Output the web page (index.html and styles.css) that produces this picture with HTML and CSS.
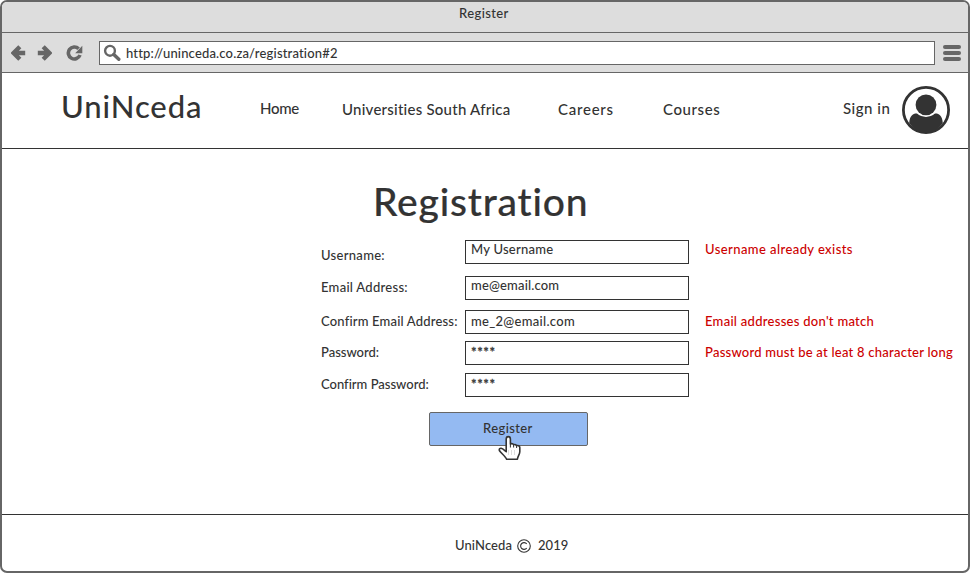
FILE: index.html
```html
<!DOCTYPE html>
<html lang="en">
<head>
<meta charset="utf-8">
<title>Register</title>
<link rel="stylesheet" href="styles.css">
</head>
<body>
<div class="window">
  <div class="titlebar"><span class="t-title">Register</span></div>
  <div class="toolbar">
    <svg class="arrow" width="16" height="16" viewBox="0 0 16 16"><path d="M8.800 1.800 2.600 8l6.200 6.200M3 8h11.200" /></svg>
    <svg class="arrow forward" width="16" height="16" viewBox="0 0 16 16"><path d="M7.200 1.800 13.400 8l-6.200 6.200M13 8H1.800" /></svg>
    <svg class="reload" width="17" height="16" viewBox="0 0 17 16"><path class="ring" d="M12.6 3.7A6 6 0 1 0 14 10" /><path class="tip" d="M16.3.8v7.4H9.2z" /></svg>
    <div class="address">
      <svg width="18" height="18" viewBox="0 0 18 18"><circle cx="7" cy="6.8" r="4.9" /><path d="M10.8 10.5 15.800 15.3" /></svg>
      <span class="t-url">http://uninceda.co.za/registration#2</span>
    </div>
    <div class="menu"><i></i><i></i><i></i></div>
  </div>
  <header class="header">
    <div class="logo">UniNceda</div>
    <nav class="nav">
      <a class="home">Home</a>
      <a class="unis">Universities South Africa</a>
      <a class="careers">Careers</a>
      <a class="courses">Courses</a>
    </nav>
    <a class="signin">Sign in</a>
    <svg class="avatar" width="48" height="48" viewBox="0 0 48 48">
      <circle class="rim" cx="24" cy="24" r="22.6" />
      <circle cx="24" cy="18.8" r="10.4" />
      <path d="M7.2 37C7.800 30 10.500 27.500 15 27.600 20 32 28 32 33 27.600 37.500 27.500 40.200 30 40.800 37 36 43.5 31 47 24 47S12 43.5 7.2 37z" />
    </svg>
  </header>
  <main class="main">
    <h1>Registration</h1>
    <form class="form">
      <div class="row r1"><label class="l1">Username:</label><div class="field high f1"><span>My Username</span></div><p class="error e1">Username already exists</p></div>
      <div class="row r2"><label class="l2">Email Address:</label><div class="field high f2"><span>me@email.com</span></div></div>
      <div class="row r3"><label class="l3">Confirm Email Address:</label><div class="field f3"><span>me_2@email.com</span></div><p class="error e3">Email addresses don't match</p></div>
      <div class="row r4"><label class="l4">Password:</label><div class="field stars"><span>****</span></div><p class="error e4">Password must be at leat 8 character long</p></div>
      <div class="row r5"><label class="l5">Confirm Password:</label><div class="field stars"><span>****</span></div></div>
      <div class="button"><span>Register</span>
        <svg class="cursor" width="24" height="26" viewBox="0 0 24 26"><path class="hand" d="M8.2 15V4.2C8.2.7 12.4.7 12.4 4.2V9c1.4-.7 2.8-.2 3.2.7 1.4-.4 2.4 0 2.9.9 1.6-.5 3.3.3 3.3 2v4.2c0 2.8-2 4.2-2.4 7.4H8.6C7.5 21.500 3 18 1.5 15.700c-.8-1.800.7-3 2.400-2.200 1.600.6 2.800 2.200 4.300 3.200z" /><path class="knuckles" d="M12.400 9v3.500M15.600 10v2.500M18.600 11v2" /><path class="creases" d="M10.500 15v5M13.500 15v5M16.500 15v5" /></svg>
      </div>
    </form>
  </main>
  <footer class="footer"><span class="brand">UniNceda</span><svg width="14" height="14" viewBox="0 0 14 14"><circle cx="7" cy="7" r="6.300" /><path d="M9.700 4.900A3.400 3.400 0 1 0 9.700 9.100" /></svg><span class="year">2019</span></footer>
</div>
</body>
</html>
```
FILE: styles.css
```css
* { box-sizing: border-box; }
html, body { height: 100%; }
body { margin: 0; background: #fff; color: #333; font: 500 13px/20px Lato, "Open Sans", sans-serif; white-space: nowrap; overflow: hidden; font-variant-ligatures: none; }
h1, p { margin: 0; }
.window { height: 573px; border: 2px solid #666; border-radius: 7px; overflow: hidden; background: #fff; }
.titlebar { height: 31px; background: #ddd; border-bottom: 1px solid #666; padding: 1px 0 0 457px; }
.t-title { letter-spacing: .4px; }
.t-url { letter-spacing: .17px; }
.toolbar { height: 40px; background: #ddd; border-bottom: 1px solid #666; display: flex; align-items: center; padding: 0 6px 0 9px; }
.arrow { fill: none; stroke: #666; stroke-width: 4.4; flex: none; }
.forward { margin-left: 9px; }
.reload { margin: 0 16px 0 14px; flex: none; }
.ring { fill: none; stroke: #666; stroke-width: 3.6; }
.tip { fill: #666; }
.address { width: 836px; flex: none; height: 24px; border: 1px solid #666; background: #fff; display: flex; align-items: center; padding-left: 3px; }
.address svg { fill: none; stroke: #666; stroke-width: 2.4; margin-right: 5px; }
.address path { stroke-width: 3.4; stroke-linecap: round; }
.menu { width: 18px; flex: none; margin-left: 8px; display: grid; gap: 2px; }
.menu i { height: 4px; border-radius: 2px; background: #666; }
.header { height: 76px; border-bottom: 1px solid #333; display: flex; align-items: flex-start; font-size: 15px; }
.logo { width: 198px; padding-left: 59px; font-size: 31px; line-height: 40px; margin-top: 13px; letter-spacing: .9px; }
.nav { display: flex; width: 643px; padding: 26px 0 0 60px; }
.home { width: 82px; margin-top: -1px; letter-spacing: -.3px; }
.unis { width: 216px; letter-spacing: .24px; }
.careers { width: 105px; letter-spacing: .75px; }
.courses { letter-spacing: .6px; }
.signin { width: 59px; padding-top: 25px; letter-spacing: .5px; }
.avatar { margin-top: 13px; fill: #333; }
.rim { fill: none; stroke: #333; stroke-width: 2.8; }
.main { height: 365px; padding-top: 27px; }
h1 { font-size: 39px; line-height: 50px; font-weight: 500; padding-left: 371px; letter-spacing: .8px; -webkit-text-stroke: .2px; }
.form { padding: 14px 0 0 319px; }
.row { display: grid; grid-template-columns: 144px 224px 1fr; align-items: start; height: 24px; }
.row label { padding-top: 1px; }
.r1 { margin-bottom: 12px; }
.r1 label { padding-top: 5px; }
.r2 { margin-bottom: 10px; }
.r3 { margin-bottom: 7px; }
.r4 { margin-bottom: 8px; }
.l1 { letter-spacing: .3px; }
.l2 { letter-spacing: .28px; }
.l3 { letter-spacing: .18px; }
.field { height: 24px; border: 1px solid #333; background: #fff; padding-left: 5px; }
.field span { display: block; }
.high span { margin-top: -2px; }
.f1 { letter-spacing: .25px; }
.f2 { letter-spacing: .17px; }
.f3 { letter-spacing: .3px; }
.stars { letter-spacing: .6px; -webkit-text-stroke: .3px; }
.error { color: #c00; padding: 1px 0 0 16px; }
.r1 .error { padding-top: 0; margin-top: -1px; }
.e1 { letter-spacing: .42px; }
.e3 { letter-spacing: .28px; }
.e4 { letter-spacing: .24px; }
.button { position: relative; width: 159px; height: 34px; margin: 15px 0 0 108px; padding: 5px 0 0 53px; border: 1px solid #666; border-radius: 2px; background: #94baf2; letter-spacing: .4px; }
.cursor { position: absolute; left: 68px; top: 22px; }
.hand { fill: #fff; stroke: #333; stroke-width: 1.6; stroke-linejoin: round; }
.knuckles { stroke: #333; stroke-width: 1; }
.creases { stroke: #ddd; stroke-width: 1; }
.footer { height: 58px; border-top: 1px solid #333; display: flex; padding: 20px 0 0 453px; }
.brand { letter-spacing: .1px; }
.footer svg { width: 14px; margin: 4px 7px 0 5px; fill: none; stroke: #333; stroke-width: 1.1; }
```
